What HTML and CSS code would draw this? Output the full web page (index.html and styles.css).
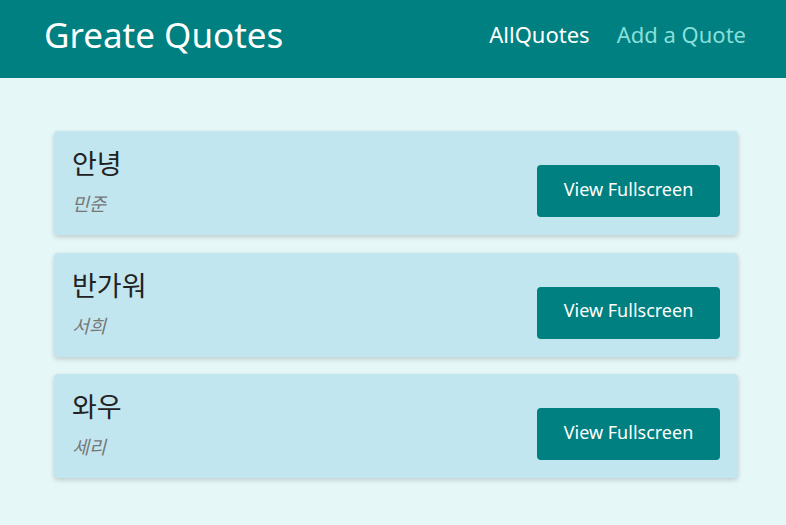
FILE: index.html
```html
<!DOCTYPE html>
<html lang="ko">
<head>
<meta charset="utf-8">
<title>Greate Quotes</title>
<link rel="stylesheet" href="styles.css">
</head>
<body>
<header class="header">
  <div class="logo">Greate Quotes</div>
  <nav class="nav">
    <a class="nav-link active" href="#">AllQuotes</a>
    <a class="nav-link" href="#">Add a Quote</a>
  </nav>
</header>
<main class="main">
  <ul class="list">
    <li class="item">
      <figure class="quote">
        <blockquote class="text">안녕</blockquote>
        <figcaption class="author">민준</figcaption>
      </figure>
      <a class="btn" href="#">View Fullscreen</a>
    </li>
    <li class="item">
      <figure class="quote">
        <blockquote class="text">반가워</blockquote>
        <figcaption class="author">서희</figcaption>
      </figure>
      <a class="btn" href="#">View Fullscreen</a>
    </li>
    <li class="item">
      <figure class="quote">
        <blockquote class="text">와우</blockquote>
        <figcaption class="author">세리</figcaption>
      </figure>
      <a class="btn" href="#">View Fullscreen</a>
    </li>
  </ul>
</main>
</body>
</html>
```
FILE: styles.css
```css
* { box-sizing: border-box; }
html, body { margin: 0; padding: 0; }
body {
  background: #e6f7f7;
  font-family: "Noto Sans", "Noto Sans CJK KR", sans-serif;
  color: #222;
}
.header {
  height: 78px;
  background: #008080;
  display: flex;
  align-items: center;
  justify-content: space-between;
  padding: 0 40px 10px 44px;
}
.logo {
  color: #fff;
  font-size: 35px;
}
.nav { display: flex; gap: 27px; }
.nav-link {
  color: #88dfd9;
  text-decoration: none;
  font-size: 22px;
}
.nav-link.active { color: #fff; }
.main { padding: 53px 48px 40px 54px; }
.list {
  list-style: none;
  margin: 0;
  padding: 0;
  display: flex;
  flex-direction: column;
  gap: 17.5px;
}
.item {
  background: #c2e6ef;
  border-radius: 4px;
  box-shadow: 0 2px 5px rgba(0,0,0,0.18);
  height: 104px;
  padding: 18px;
  display: flex;
  justify-content: space-between;
  align-items: flex-end;
}
.quote { margin: 0; align-self: stretch; }
.text {
  margin: 0;
  font-size: 27px;
  line-height: 30px;
  color: #222;
}
.author {
  margin-top: 11px;
  font-size: 18.5px;
  font-style: italic;
  color: #777;
}
.btn {
  width: 183px;
  height: 52px;
  padding-bottom: 5px;
  background: #008080;
  color: #fff;
  border-radius: 4px;
  text-decoration: none;
  font-size: 18px;
  display: flex;
  align-items: center;
  justify-content: center;
}
```
